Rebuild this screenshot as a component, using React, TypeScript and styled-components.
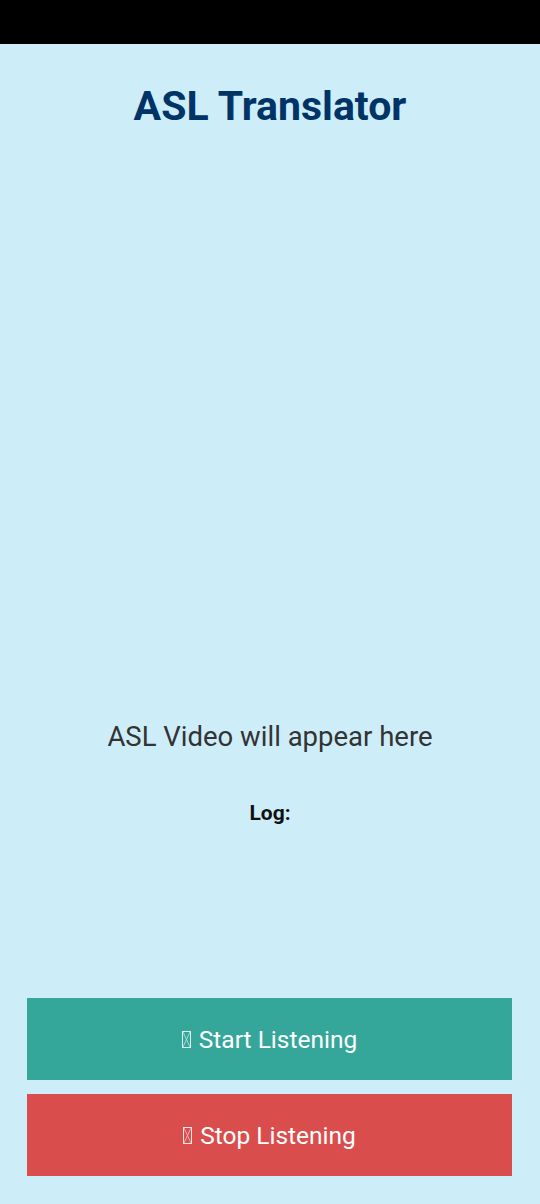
import styled, { createGlobalStyle } from "styled-components";

const GlobalStyle = createGlobalStyle`
   html, body {
      margin: 0;
      padding: 0;
      background: #cdeef9;
   }
   body {
      font-family: Roboto, "Noto Sans", sans-serif;
   }
`;

const Screen = styled.div`
   display: flex;
   flex-direction: column;
   height: 1204px;
   background: #cdeef9;
`;

const StatusBar = styled.div`
   height: 44px;
   background: #000000;
   flex-shrink: 0;
`;

const Title = styled.h1`
   margin: 38px 0 0;
   font-size: 41px;
   line-height: 48px;
   font-weight: 700;
   color: #003366;
   text-align: center;
`;

const VideoArea = styled.div`
   height: 623px;
   display: flex;
   align-items: flex-end;
   justify-content: center;
`;

const Placeholder = styled.div`
   font-size: 27.5px;
   line-height: 32px;
   color: #333333;
`;

const LogLabel = styled.div`
   margin-top: 48px;
   font-size: 21px;
   line-height: 24px;
   font-weight: 700;
   color: #111111;
   text-align: center;
`;

const Controls = styled.div`
   margin-top: auto;
   display: flex;
   flex-direction: column;
   gap: 14px;
   padding: 0 28px 28px 27px;
`;

const ActionButton = styled.button<{ $bg: string }>`
   height: 82px;
   border: none;
   border-radius: 0;
   background: ${(p) => p.$bg};
   color: #ffffff;
   font-family: Roboto, "Noto Sans", sans-serif;
   font-size: 24.5px;
   display: flex;
   align-items: center;
   justify-content: center;
   gap: 8px;
   cursor: pointer;
`;

// missing-glyph box, as the emoji renders on the device
const Tofu = () => (
   <svg width="9" height="17" viewBox="0 0 9 17">
      <rect x="0.5" y="0.5" width="8" height="16" fill="none" stroke="#ffffff" strokeWidth="1" opacity="0.85" />
      <path d="M1 1 L8 16 M8 1 L1 16" stroke="#ffffff" strokeWidth="0.8" opacity="0.7" />
   </svg>
);

const App = () => {
   return (
      <Screen>
         <GlobalStyle />
         <StatusBar />
         <Title>ASL Translator</Title>
         <VideoArea>
            <Placeholder>ASL Video will appear here</Placeholder>
         </VideoArea>
         <LogLabel>Log:</LogLabel>
         <Controls>
            <ActionButton $bg="#34a69a">
               <Tofu />
               Start Listening
            </ActionButton>
            <ActionButton $bg="#d94d4d">
               <Tofu />
               Stop Listening
            </ActionButton>
         </Controls>
      </Screen>
   );
};

export default App;
